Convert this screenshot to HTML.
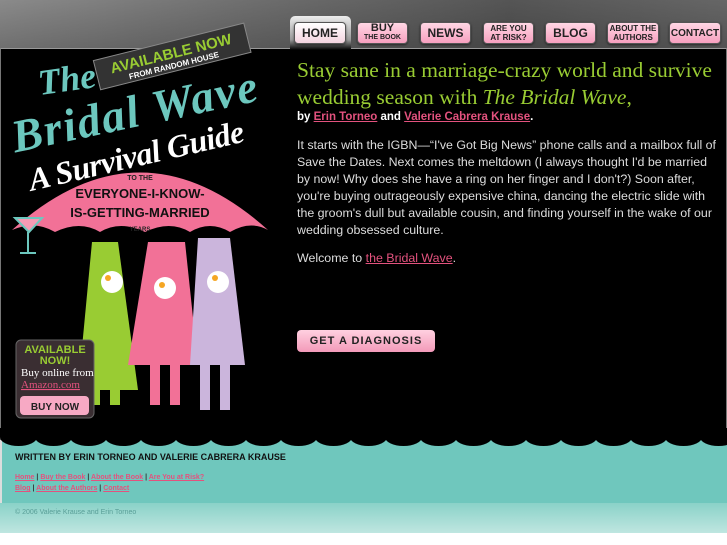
<!DOCTYPE html>
<html><head><meta charset="utf-8"><style>
*{margin:0;padding:0;box-sizing:border-box}
body{width:727px;height:545px;overflow:hidden;background:#fff;font-family:"Liberation Sans",sans-serif;position:relative}
#hdr{position:absolute;left:0;top:0;width:727px;height:50px;background:linear-gradient(90deg,#8a8a8a,#6a6a6a 40%,#555 70%,#666)}
#hdr:after{content:"";position:absolute;left:0;right:0;top:0;height:50px;background:linear-gradient(#0000,#0003)}
.tab{position:absolute;top:22px;height:22px;background:linear-gradient(#ffd6e4,#f7a0bf);border:1px solid #555;border-radius:4px;font:bold 10px "Liberation Sans",sans-serif;color:#222;text-align:center;display:flex;flex-direction:column;align-items:center;justify-content:center;box-shadow:0 1px 2px #0008;z-index:2;line-height:9px}
.home{position:absolute;left:290px;top:16px;width:61px;height:34px;background:linear-gradient(#eee,#999 70%,#000);border-radius:5px 5px 0 0;z-index:1}
#main{position:absolute;left:0;top:48px;width:727px;height:395px;background:#000;border-top:1px solid #999;border-left:1px solid #777;border-right:1px solid #777}
#foot{position:absolute;left:0;top:440px;width:727px;height:63px;background:#6fc7bd;border-left:2px solid #ddd}
#foot2{position:absolute;left:0;top:503px;width:727px;height:30px;background:linear-gradient(#8ad2c8,#bfe6e0)}
.sc{position:absolute;top:428px;width:37px;height:18px;background:#000;border-radius:0 0 50% 50%}
h1{position:absolute;left:297px;top:57px;width:415px;font:21.5px/27px "Liberation Serif",serif;color:#99cc33;font-weight:normal}
.by{position:absolute;left:297px;top:111px;font:bold 11.5px "Liberation Sans",sans-serif;color:#fff}
a{color:#e3527e}
.p{position:absolute;left:297px;font:12.4px/17px "Liberation Sans",sans-serif;color:#ddd;width:425px}
.diag{position:absolute;left:297px;top:330px;width:138px;height:22px;background:linear-gradient(#ffd0e0,#f39ab9);border-radius:4px;font:bold 11px "Liberation Sans",sans-serif;color:#222;text-align:center;line-height:22px;letter-spacing:1px}
</style></head><body>
<div id="hdr"></div>
<div class="home"></div>
<div class="tab" style="left:294px;width:52px;background:linear-gradient(#fff,#f4d4e0);font-size:12px">HOME</div>
<div class="tab" style="left:357px;width:51px;font-size:11px"><span>BUY</span><span style="font-size:7px">THE BOOK</span></div>
<div class="tab" style="left:420px;width:51px;font-size:12px">NEWS</div>
<div class="tab" style="left:483px;width:51px;font-size:8px"><span>ARE YOU</span><span>AT RISK?</span></div>
<div class="tab" style="left:545px;width:51px;font-size:12px">BLOG</div>
<div class="tab" style="left:607px;width:52px;font-size:8px"><span>ABOUT THE</span><span>AUTHORS</span></div>
<div class="tab" style="left:669px;width:52px;font-size:10px">CONTACT</div>
<div id="main"></div>
<div id="foot"></div>
<div id="foot2"></div>
<div class="sc" style="left:0"></div><div class="sc" style="left:35px"></div><div class="sc" style="left:70px"></div><div class="sc" style="left:105px"></div><div class="sc" style="left:140px"></div><div class="sc" style="left:175px"></div><div class="sc" style="left:210px"></div><div class="sc" style="left:245px"></div><div class="sc" style="left:280px"></div><div class="sc" style="left:315px"></div><div class="sc" style="left:350px"></div><div class="sc" style="left:385px"></div><div class="sc" style="left:420px"></div><div class="sc" style="left:455px"></div><div class="sc" style="left:490px"></div><div class="sc" style="left:525px"></div><div class="sc" style="left:560px"></div><div class="sc" style="left:595px"></div><div class="sc" style="left:630px"></div><div class="sc" style="left:665px"></div><div class="sc" style="left:700px"></div>
<svg style="position:absolute;left:0;top:20px" width="290" height="410">
<text x="38" y="72" font-family="Liberation Serif" font-style="italic" font-weight="bold" font-size="36" fill="#6cc7be" transform="rotate(-8 60 60)">The</text>
<text x="12" y="108" font-family="Liberation Serif" font-style="italic" font-weight="bold" font-size="46" fill="#6cc7be" transform="rotate(-12 130 105)" textLength="250">Bridal Wave</text>
<g transform="rotate(-14 170 38)"><rect x="95" y="22" width="155" height="30" fill="#333" stroke="#888"/>
<text x="172" y="39" font-family="Liberation Sans" font-weight="bold" font-size="15" fill="#99cc33" text-anchor="middle">AVAILABLE NOW</text>
<text x="172" y="49" font-family="Liberation Sans" font-weight="bold" font-size="8" fill="#fff" text-anchor="middle">FROM RANDOM HOUSE</text></g>
<text x="28" y="148" font-family="Liberation Serif" font-style="italic" font-weight="bold" font-size="32" fill="#fff" transform="rotate(-13 130 144)" textLength="220">A Survival Guide</text>
<path d="M12 210 Q140 95 268 210 Q250 200 230 212 Q210 200 190 212 Q170 200 145 212 Q120 200 100 212 Q80 200 55 212 Q35 200 12 210Z" fill="#f27197"/>
<text x="140" y="160" font-family="Liberation Sans" font-weight="bold" font-size="7" fill="#222" text-anchor="middle">TO THE</text>
<text x="140" y="178" font-family="Liberation Sans" font-weight="bold" font-size="13" fill="#111" text-anchor="middle">EVERYONE-I-KNOW-</text>
<text x="140" y="197" font-family="Liberation Sans" font-weight="bold" font-size="13" fill="#111" text-anchor="middle">IS-GETTING-MARRIED</text>
<text x="140" y="211" font-family="Liberation Sans" font-weight="bold" font-size="6" fill="#222" text-anchor="middle">YEARS</text>
<path d="M92 222 L118 222 L138 370 L78 370Z" fill="#99cc33"/>
<path d="M148 222 L185 222 L198 345 L128 345Z" fill="#f27197"/>
<path d="M198 218 L230 218 L245 345 L190 345Z" fill="#cbb5dc"/>
<path d="M15 198 L42 198 L29 212Z M28 212 V232 M20 233 H36" fill="#f59ab4" stroke="#6cc7be" stroke-width="2"/>
<path d="M90 355 H100 V385 H90Z M110 355 H120 V385 H110Z" fill="#99cc33"/>
<path d="M150 345 H160 V385 H150Z M170 345 H180 V385 H170Z" fill="#f27197"/>
<path d="M200 345 H210 V390 H200Z M220 345 H230 V390 H220Z" fill="#cbb5dc"/>
<g fill="#fff"><circle cx="112" cy="262" r="11"/><circle cx="165" cy="268" r="11"/><circle cx="218" cy="262" r="11"/></g>
<g fill="#f5a623"><circle cx="108" cy="258" r="3"/><circle cx="162" cy="265" r="3"/><circle cx="215" cy="258" r="3"/></g>
<rect x="16" y="320" width="78" height="78" rx="5" fill="#3a2e32" stroke="#666"/>
<text x="55" y="333" font-family="Liberation Sans" font-weight="bold" font-size="11" fill="#99cc33" text-anchor="middle">AVAILABLE</text>
<text x="55" y="344" font-family="Liberation Sans" font-weight="bold" font-size="11" fill="#99cc33" text-anchor="middle">NOW!</text>
<text x="21" y="356" font-family="Liberation Serif" font-size="11" fill="#fff">Buy online from</text>
<text x="21" y="368" font-family="Liberation Serif" font-size="11" fill="#e3527e" text-decoration="underline">Amazon.com</text>
<rect x="20" y="376" width="69" height="19" rx="4" fill="#f7a9c4"/>
<text x="55" y="390" font-family="Liberation Sans" font-weight="bold" font-size="10" fill="#222" text-anchor="middle">BUY NOW</text>
</svg>
<h1>Stay sane in a marriage-crazy world and survive wedding season with <i>The Bridal Wave</i>,</h1>
<div class="by">by <a href="#">Erin Torneo</a> and <a href="#">Valerie Cabrera Krause</a>.</div>
<div class="p" style="top:137px">It starts with the IGBN—“I've Got Big News” phone calls and a mailbox full of Save the Dates. Next comes the meltdown (I always thought I'd be married by now! Why does she have a ring on her finger and I don't?) Soon after, you're buying outrageously expensive china, dancing the electric slide with the groom's dull but available cousin, and finding yourself in the wake of our wedding obsessed culture.</div>
<div class="p" style="top:250px">Welcome to <a href="#">the Bridal Wave</a>.</div>
<div class="diag">GET A DIAGNOSIS</div>
<div style="position:absolute;left:15px;top:452px;font:bold 9px 'Liberation Sans',sans-serif;color:#111">WRITTEN BY ERIN TORNEO AND VALERIE CABRERA KRAUSE</div>
<div style="position:absolute;left:15px;top:472px;font:bold 7px/11px 'Liberation Sans',sans-serif;color:#333"><a href="#">Home</a> | <a href="#">Buy the Book</a> | <a href="#">About the Book</a> | <a href="#">Are You at Risk?</a><br><a href="#">Blog</a> | <a href="#">About the Authors</a> | <a href="#">Contact</a></div>
<div style="position:absolute;left:15px;top:509px;font:7px 'Liberation Sans',sans-serif;color:#5a9f98">© 2006 Valerie Krause and Erin Torneo</div>
</body></html>
